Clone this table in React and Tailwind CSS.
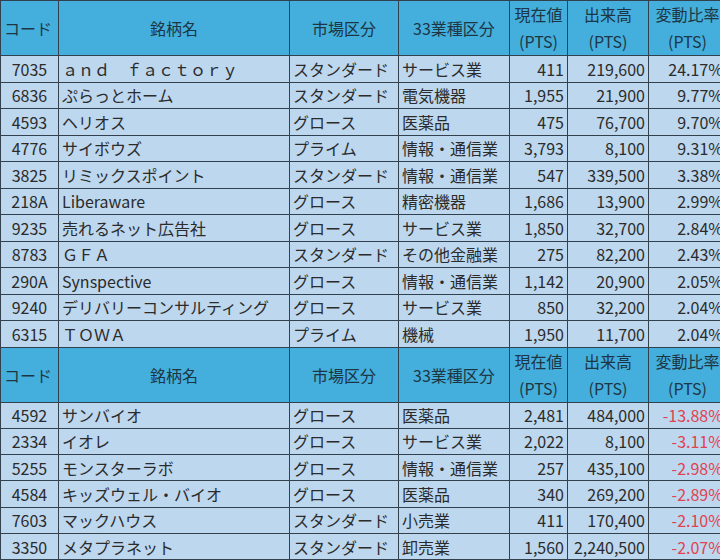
import React from 'react';

const up = [
    ['7035', 'ａｎｄ　ｆａｃｔｏｒｙ', 'スタンダード', 'サービス業', '411', '219,600', '24.17%'],
    ['6836', 'ぷらっとホーム', 'スタンダード', '電気機器', '1,955', '21,900', '9.77%'],
    ['4593', 'ヘリオス', 'グロース', '医薬品', '475', '76,700', '9.70%'],
    ['4776', 'サイボウズ', 'プライム', '情報・通信業', '3,793', '8,100', '9.31%'],
    ['3825', 'リミックスポイント', 'スタンダード', '情報・通信業', '547', '339,500', '3.38%'],
    ['218A', 'Liberaware', 'グロース', '精密機器', '1,686', '13,900', '2.99%'],
    ['9235', '売れるネット広告社', 'グロース', 'サービス業', '1,850', '32,700', '2.84%'],
    ['8783', 'ＧＦＡ', 'スタンダード', 'その他金融業', '275', '82,200', '2.43%'],
    ['290A', 'Synspective', 'グロース', '情報・通信業', '1,142', '20,900', '2.05%'],
    ['9240', 'デリバリーコンサルティング', 'グロース', 'サービス業', '850', '32,200', '2.04%'],
    ['6315', 'ＴＯＷＡ', 'プライム', '機械', '1,950', '11,700', '2.04%'],
];

const down = [
    ['4592', 'サンバイオ', 'グロース', '医薬品', '2,481', '484,000', '-13.88%'],
    ['2334', 'イオレ', 'グロース', 'サービス業', '2,022', '8,100', '-3.11%'],
    ['5255', 'モンスターラボ', 'グロース', '情報・通信業', '257', '435,100', '-2.98%'],
    ['4584', 'キッズウェル・バイオ', 'グロース', '医薬品', '340', '269,200', '-2.89%'],
    ['7603', 'マックハウス', 'スタンダード', '小売業', '411', '170,400', '-2.10%'],
    ['3350', 'メタプラネット', 'スタンダード', '卸売業', '1,560', '2,240,500', '-2.07%'],
];

const cell = 'border border-[#33414f] px-[3px] whitespace-nowrap overflow-hidden';

const HeaderRow = () => (
    <tr className="h-[54px] bg-[#44aedc] text-[#1d3644]">
        <th className={`${cell} text-left font-normal`}>コード</th>
        <th className={`${cell} text-center font-normal`}>銘柄名</th>
        <th className={`${cell} text-center font-normal`}>市場区分</th>
        <th className={`${cell} text-center font-normal`}>33業種区分</th>
        <th className={`${cell} text-center font-normal leading-[27px]`}>現在値<br />(PTS)</th>
        <th className={`${cell} text-center font-normal leading-[27px]`}>出来高<br />(PTS)</th>
        <th className={`${cell} text-center font-normal leading-[27px]`}>変動比率<br />(PTS)</th>
    </tr>
);

const DataRow = ({ r, neg, h }) => (
    <tr className={`${h} bg-[#bdd7ee] text-[#2b2b2b]`}>
        <td className={`${cell} text-center`}>{r[0]}</td>
        <td className={`${cell} text-left`}>{r[1]}</td>
        <td className={`${cell} text-left`}>{r[2]}</td>
        <td className={`${cell} text-left`}>{r[3]}</td>
        <td className={`${cell} text-right`}>{r[4]}</td>
        <td className={`${cell} text-right`}>{r[5]}</td>
        <td className={`${cell} text-right ${neg ? 'text-[#e0434f]' : ''}`}>{r[6]}</td>
    </tr>
);

export default function App() {
    return (
        <div className="w-[720px] h-[560px] overflow-hidden bg-[#bdd7ee]">
            <table
                className="table-fixed border-collapse w-[726px] text-[16px] leading-none"
                style={{ fontFamily: '"Noto Sans CJK JP", "Noto Sans", sans-serif' }}
            >
                <colgroup>
                    <col className="w-[58px]" />
                    <col className="w-[231px]" />
                    <col className="w-[109px]" />
                    <col className="w-[111px]" />
                    <col className="w-[58px]" />
                    <col className="w-[81px]" />
                    <col className="w-[78px]" />
                </colgroup>
                <tbody>
                    <HeaderRow />
                    {up.map(r => <DataRow key={r[0]} r={r} h="h-[26.5px]" />)}
                    <HeaderRow />
                    {down.map(r => <DataRow key={r[0]} r={r} neg h="h-[26.3px]" />)}
                </tbody>
            </table>
        </div>
    );
}
